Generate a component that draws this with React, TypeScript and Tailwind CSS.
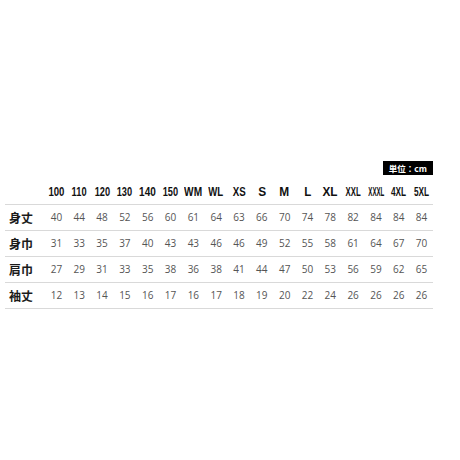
const sizes = [
  { label: '100', fit: 'scale-x-[0.77]' },
  { label: '110', fit: 'scale-x-[0.74]' },
  { label: '120', fit: 'scale-x-[0.74]' },
  { label: '130', fit: 'scale-x-[0.74]' },
  { label: '140', fit: 'scale-x-[0.8]' },
  { label: '150', fit: 'scale-x-[0.74]' },
  { label: 'WM', fit: 'scale-x-[0.81]' },
  { label: 'WL', fit: 'scale-x-[0.77]' },
  { label: 'XS', fit: 'scale-x-[0.78]' },
  { label: 'S', fit: 'scale-x-[0.95]' },
  { label: 'M', fit: 'scale-x-[0.95]' },
  { label: 'L', fit: 'scale-x-[0.92]' },
  { label: 'XL', fit: 'scale-x-[0.94]' },
  { label: 'XXL', fit: 'scale-x-[0.62]' },
  { label: 'XXXL', fit: 'scale-x-[0.49]' },
  { label: '4XL', fit: 'scale-x-[0.66]' },
  { label: '5XL', fit: 'scale-x-[0.66]' },
]

const rows = [
  { label: '身丈', values: [40, 44, 48, 52, 56, 60, 61, 64, 63, 66, 70, 74, 78, 82, 84, 84, 84] },
  { label: '身巾', values: [31, 33, 35, 37, 40, 43, 43, 46, 46, 49, 52, 55, 58, 61, 64, 67, 70] },
  { label: '肩巾', values: [27, 29, 31, 33, 35, 38, 36, 38, 41, 44, 47, 50, 53, 56, 59, 62, 65] },
  { label: '袖丈', values: [12, 13, 14, 15, 16, 17, 16, 17, 18, 19, 20, 22, 24, 26, 26, 26, 26] },
]

const headFont = { fontFamily: '"Liberation Sans", Arial, sans-serif' }
const cjkFont = { fontFamily: '"Noto Sans CJK JP", sans-serif' }
const numFont = { fontFamily: '"Open Sans", sans-serif' }

export default function App() {
  return (
    <div className="h-[460px] w-[460px] bg-white pt-[161px]">
      <div className="ml-[5px] w-[428px]">
        <div className="flex justify-end">
          <span
            className="flex h-[14px] items-center bg-black px-[6px] text-[8.5px] font-bold leading-none text-white"
            style={cjkFont}
          >
            単位：cm
          </span>
        </div>

        <div
          className="mt-[5px] grid h-[25px] grid-cols-[40px_repeat(17,minmax(0,1fr))] items-center border-b border-[#d9d9d9] pt-[1px] text-[12.5px] font-bold text-[#111]"
          style={headFont}
        >
          <span />
          {sizes.map((s) => (
            <span key={s.label} className="flex justify-center">
              <span className={`inline-block whitespace-nowrap ${s.fit}`}>{s.label}</span>
            </span>
          ))}
        </div>

        {rows.map((row) => (
          <div
            key={row.label}
            className="grid h-[26px] grid-cols-[40px_repeat(17,minmax(0,1fr))] items-center border-b border-[#d9d9d9]"
          >
            <span className="pl-[4px] text-[12px] font-bold text-[#1a1a1a]" style={cjkFont}>
              {row.label}
            </span>
            {row.values.map((v, i) => (
              <span key={i} className="text-center text-[10px] text-[#555]" style={numFont}>
                {v}
              </span>
            ))}
          </div>
        ))}
      </div>
    </div>
  )
}
